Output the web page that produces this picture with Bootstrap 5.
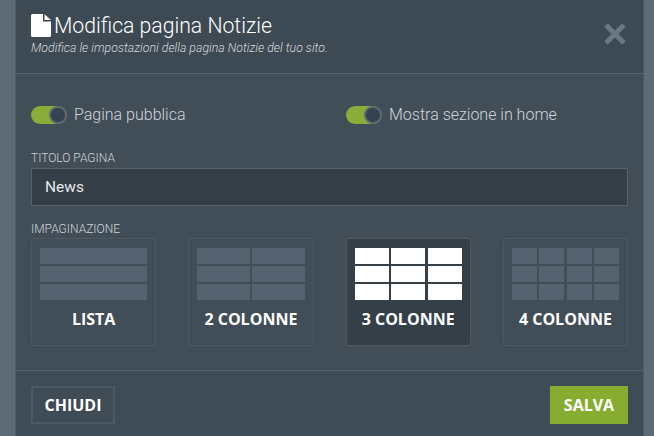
<!DOCTYPE html>
<html lang="it">
<head>
<meta charset="utf-8">
<title>Modifica pagina Notizie</title>
<link href="https://cdn.jsdelivr.net/npm/bootstrap@5.3.0/dist/css/bootstrap.min.css" rel="stylesheet">
<style>
html,body{height:100%;overflow:hidden}
body{background:#5b6b77;font-family:Roboto,"Liberation Sans",sans-serif;font-weight:300;color:#e4e8eb;padding:0 10px 0 15px}
.sheet{background:#414d57;height:436px;border:0;border-left:1px solid #4d5a64;border-right:1px solid #4d5a64;border-radius:0;display:block}
.sheet-head{background:#3d4953;height:74px;padding:13px 15px 0;border-bottom:1px solid #55626c;display:flex;justify-content:space-between}
.sheet-title{font-size:21.2px;line-height:25px;font-weight:300;color:#fff;margin:0;display:flex;align-items:center;gap:3px}
.sheet-sub{font-size:12.35px;line-height:14px;font-style:italic;color:#d5dade;margin:3px 0 0}
.shut{background:none;border:0;padding:0;margin:10px 2px 0 0;width:22px;height:22px;line-height:0}
.sheet-body{height:297px;padding:29px 15px 0;border-bottom:1px solid #55626c}
.toggle-row{display:grid;grid-template-columns:1fr 1fr;column-gap:33px;height:20px;margin-bottom:28px}
.toggle-item{display:flex;align-items:center;gap:7px;font-size:16px;color:#d0d6db}
.slider{width:36px;height:18px;border-radius:9px;background:#8aad3a;position:relative;display:block}
.slider::after{content:"";position:absolute;right:0;top:0;width:18px;height:18px;border-radius:50%;background:#36424f;border:2px solid #5a6670}
.cap{font-size:12px;line-height:14px;color:#d0d6db;margin:0 0 3px;font-weight:300;display:block}
.cap-near{margin-bottom:2px}
.title-field.form-control{height:38px;background:#333e46;border:1px solid #55626c;border-radius:0;color:#e6eaed;font-size:15.5px;padding:0 13px;font-weight:400;box-shadow:none}
.layouts{display:grid;grid-template-columns:repeat(4,1fr);column-gap:32px}
.layout-tile{height:108px;border:1px solid #4c5963;border-radius:3px;padding:9px 8px 0;background:transparent;color:#fff;display:flex;flex-direction:column;justify-content:flex-start;width:100%}
.layout-tile.chosen{background:#343f48}
.cells{display:grid;gap:2px 2.5px;margin-bottom:9px;width:100%}
.cells span{height:16px;background:#54636f;display:block}
.chosen .cells span{background:#fff}
.c1{grid-template-columns:1fr}.c2{grid-template-columns:repeat(2,1fr)}.c3{grid-template-columns:repeat(3,1fr)}.c4{grid-template-columns:repeat(4,1fr)}
.tile-name{font-family:"Open Sans","Liberation Sans",sans-serif;font-weight:700;font-size:16px;line-height:20px;color:#fff;display:block;text-align:center;width:100%}
.sheet-foot{padding:15px 15px 0;display:flex;justify-content:space-between;background:#3f4b55;height:65px}
.act{height:38px;border-radius:0;font-family:"Open Sans","Liberation Sans",sans-serif;font-weight:700;font-size:16px;color:#fff;padding:0;line-height:34px}
.act-close{width:84px;background:transparent;border:2px solid #4c5963}
.act-save{width:78px;background:#86ad2f;border:0;line-height:38px}
</style>
</head>
<body>
<div class="modal-content sheet">
  <div class="sheet-head">
    <div>
      <h1 class="sheet-title">
        <svg width="20" height="23" viewBox="0 0 20 23" aria-hidden="true"><path d="M1.500 0H12v7.500h8V21.500a1.500 1.500 0 0 1-1.500 1.500h-17A1.500 1.500 0 0 1 0 21.500V1.500A1.500 1.500 0 0 1 1.500 0zM13.500 0.300L20 6H13.500z" fill="#fff"/></svg>
        Modifica pagina Notizie
      </h1>
      <p class="sheet-sub">Modifica le impostazioni della pagina Notizie del tuo sito.</p>
    </div>
    <button type="button" class="shut" aria-label="Chiudi">
      <svg width="22" height="22" viewBox="0 0 22 22" aria-hidden="true"><path d="M2 2L20 20M20 2L2 20" stroke="#6a7883" stroke-width="5"/></svg>
    </button>
  </div>
  <div class="sheet-body">
    <div class="toggle-row">
      <div class="toggle-item"><span class="slider"></span>Pagina pubblica</div>
      <div class="toggle-item"><span class="slider"></span>Mostra sezione in home</div>
    </div>
    <label class="cap" for="titolo">TITOLO PAGINA</label>
    <input id="titolo" class="form-control title-field" type="text" value="News">
    <span class="cap cap-near mt-3">IMPAGINAZIONE</span>
    <div class="layouts">
      <button type="button" class="layout-tile"><span class="cells c1"><span></span><span></span><span></span></span><span class="tile-name">LISTA</span></button>
      <button type="button" class="layout-tile"><span class="cells c2"><span></span><span></span><span></span><span></span><span></span><span></span></span><span class="tile-name">2 COLONNE</span></button>
      <button type="button" class="layout-tile chosen"><span class="cells c3"><span></span><span></span><span></span><span></span><span></span><span></span><span></span><span></span><span></span></span><span class="tile-name">3 COLONNE</span></button>
      <button type="button" class="layout-tile"><span class="cells c4"><span></span><span></span><span></span><span></span><span></span><span></span><span></span><span></span><span></span><span></span><span></span><span></span></span><span class="tile-name">4 COLONNE</span></button>
    </div>
  </div>
  <div class="sheet-foot">
    <button type="button" class="btn act act-close">CHIUDI</button>
    <button type="button" class="btn act act-save">SALVA</button>
  </div>
</div>
</body>
</html>
